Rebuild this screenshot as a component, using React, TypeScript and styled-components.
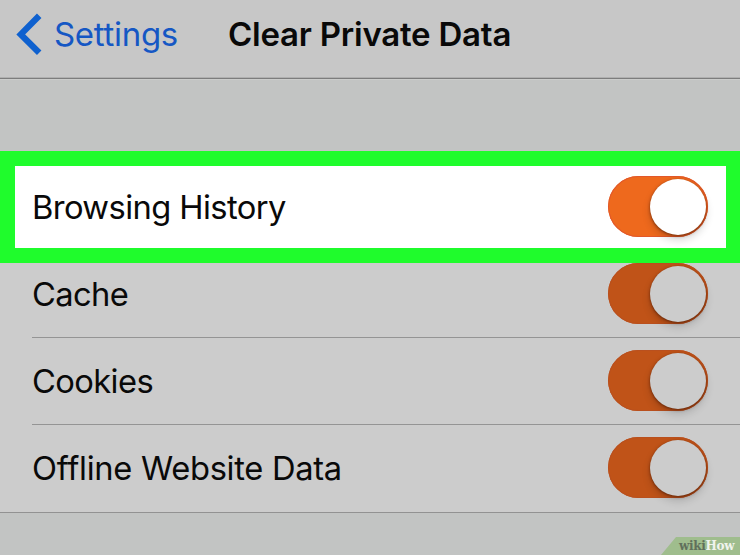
import React from "react";
import styled, { createGlobalStyle } from "styled-components";

const GlobalStyle = createGlobalStyle`
  * { box-sizing: border-box; }
  body { margin: 0; overflow: hidden; background: #c2c4c3; }
`;

const Screen = styled.main`
  position: relative;
  width: 740px;
  height: 555px;
  overflow: hidden;
  display: flex;
  flex-direction: column;
  background: #c2c4c3;
  color: #090909;
  font-family: Inter, "Liberation Sans", sans-serif;
`;

const NavBar = styled.header`
  flex: none;
  height: 79px;
  display: flex;
  align-items: flex-start;
  background: #c7c7c7;
  border-bottom: 1px solid #7d7d7d;
  box-shadow: 0 1px 0 #cbcccb, inset 0 -1px 0 #b0b0b0;
`;

const BackButton = styled.button`
  flex: none;
  width: 228px;
  height: 69px;
  padding: 0 0 0 16px;
  display: flex;
  align-items: center;
  gap: 12px;
  border: 0;
  background: none;
  color: #1557c4;
  font: 400 33px/69px Inter, "Liberation Sans", sans-serif;
  letter-spacing: -0.3px;
  white-space: nowrap;
`;

const Title = styled.h1`
  margin: 0;
  font-size: 33px;
  line-height: 69px;
  font-weight: 600;
  letter-spacing: -0.23px;
  white-space: nowrap;
`;

const Chevron = styled.svg`
  flex: none;
  width: 26px;
  height: 45px;
`;

const Group = styled.section`
  flex: none;
  margin-top: 72px;
  height: 362px;
  background: #cccccc;
  border-bottom: 1px solid #929292;
`;

const BaseRow = styled.div`
  display: flex;
  align-items: flex-start;
  justify-content: space-between;
`;

const HighlightRow = styled(BaseRow)`
  height: 112px;
  padding: 10px 18px 0 17px;
  border: 15px solid #1ffc2c;
  border-right-width: 14px;
  background: #ffffff;
`;

const Row = styled(BaseRow)<{ $height: number; $top: number; $divider?: boolean }>`
  height: ${(p) => p.$height}px;
  margin-left: 32px;
  padding: ${(p) => p.$top}px 32px 0 0;
  border-bottom: ${(p) => (p.$divider ? "1px solid #949494" : "0")};
`;

const Label = styled.span<{ $spacing: number }>`
  font-size: 32.7px;
  line-height: 62px;
  letter-spacing: ${(p) => p.$spacing}px;
  white-space: nowrap;
`;

const Track = styled.span<{ $bright?: boolean }>`
  flex: none;
  display: flex;
  justify-content: flex-end;
  width: 100px;
  height: 61px;
  padding: 3px 2px 0 0;
  border-radius: 31px;
  background: ${(p) => (p.$bright ? "#ee691d" : "#c05318")};
  box-shadow: inset 0 0 0 1px ${(p) => (p.$bright ? "#e2582a" : "#b9501e")};
`;

const Knob = styled.span<{ $bright?: boolean }>`
  width: 56px;
  height: 56px;
  border-radius: 50%;
  background: ${(p) => (p.$bright ? "#ffffff" : "#cccccc")};
  box-shadow: 0 1px 3px rgba(65, 20, 0, 0.65), 0 5px 9px rgba(0, 0, 0, 0.16);
`;

const Watermark = styled.div`
  position: absolute;
  right: 0;
  bottom: 0;
  width: 79px;
  height: 18px;
  padding-left: 18px;
  background: #9fbd8d;
  clip-path: polygon(15px 0, 100% 0, 100% 100%, 0 100%);
  color: #61705b;
  font: 700 12px/18px "DejaVu Serif", serif;
  letter-spacing: -0.3px;
  white-space: nowrap;
`;

const How = styled.span`
  color: #f0f4ed;
`;

const Toggle = ({ bright }: { bright?: boolean }) => (
  <Track $bright={bright} role="switch" aria-checked="true">
    <Knob $bright={bright} />
  </Track>
);

export default function App() {
  return (
    <>
      <GlobalStyle />
      <Screen>
        <NavBar>
          <BackButton>
            <Chevron viewBox="0 0 26 45">
              <path d="M23.2 3.8 4.8 22.4l18.4 18.4" fill="none" stroke="#0f61cf" strokeWidth="6.3" />
            </Chevron>
            Settings
          </BackButton>
          <Title>Clear Private Data</Title>
        </NavBar>
        <Group>
          <HighlightRow>
            <Label $spacing={-0.6}>Browsing History</Label>
            <Toggle bright />
          </HighlightRow>
          <Row $height={75} $top={0} $divider>
            <Label $spacing={-0.6}>Cache</Label>
            <Toggle />
          </Row>
          <Row $height={87} $top={12} $divider>
            <Label $spacing={-0.6}>Cookies</Label>
            <Toggle />
          </Row>
          <Row $height={87} $top={12}>
            <Label $spacing={-0.3}>Offline Website Data</Label>
            <Toggle />
          </Row>
        </Group>
        <Watermark>
          wiki<How>How</How>
        </Watermark>
      </Screen>
    </>
  );
}
